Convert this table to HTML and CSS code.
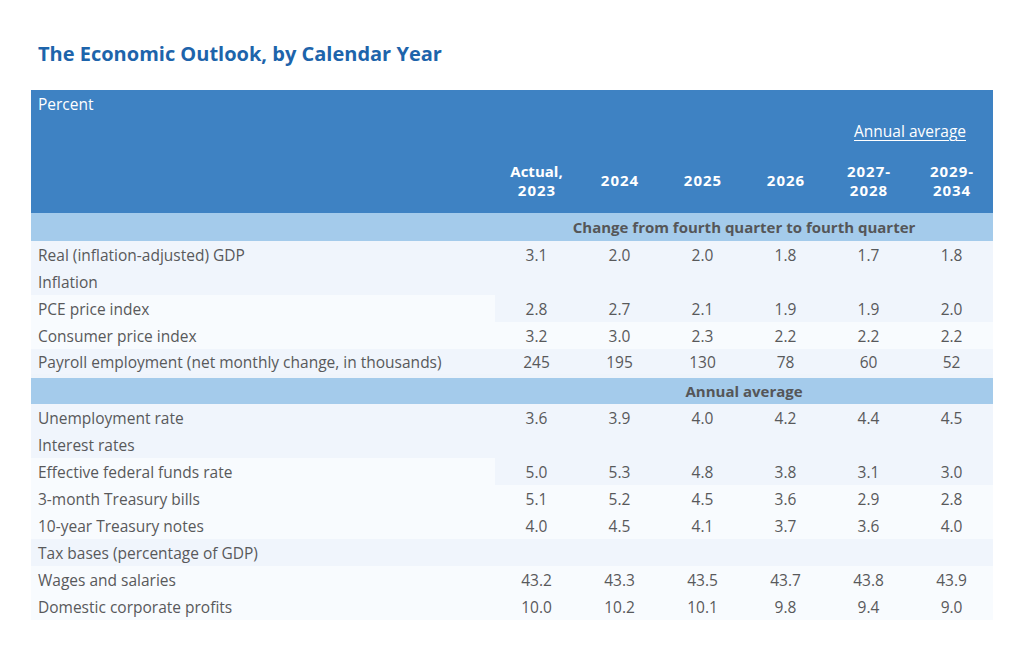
FILE: index.html
```html
<!DOCTYPE html>
<html lang="en">
<head>
<meta charset="utf-8">
<title>The Economic Outlook, by Calendar Year</title>
<link rel="stylesheet" href="styles.css">
</head>
<body>
<main class="page">
  <h1 class="title">The Economic Outlook, by Calendar Year</h1>
  <table class="outlook">
    <colgroup>
      <col class="col-label">
      <col class="col-num"><col class="col-num"><col class="col-num">
      <col class="col-num"><col class="col-num"><col class="col-num">
    </colgroup>
    <thead>
      <tr class="h-unit"><th colspan="7" class="unit">Percent</th></tr>
      <tr class="h-group">
        <th colspan="5"></th>
        <th colspan="2" class="group"><span class="ul">Annual average</span></th>
      </tr>
      <tr class="h-cols">
        <th></th>
        <th>Actual,<br><span class="yr">2023</span></th>
        <th><span class="yr">2024</span></th>
        <th><span class="yr">2025</span></th>
        <th><span class="yr">2026</span></th>
        <th><span class="yr">2027-</span><br><span class="yr">2028</span></th>
        <th><span class="yr">2029-</span><br><span class="yr">2034</span></th>
      </tr>
    </thead>
    <tbody>
      <tr class="section"><td></td><td colspan="6">Change from fourth quarter to fourth quarter</td></tr>
      <tr class="main"><td>Real (inflation-adjusted) GDP</td><td>3.1</td><td>2.0</td><td>2.0</td><td>1.8</td><td>1.7</td><td>1.8</td></tr>
      <tr class="main"><td>Inflation</td><td></td><td></td><td></td><td></td><td></td><td></td></tr>
      <tr class="sub first"><td>PCE price index</td><td>2.8</td><td>2.7</td><td>2.1</td><td>1.9</td><td>1.9</td><td>2.0</td></tr>
      <tr class="sub"><td>Consumer price index</td><td>3.2</td><td>3.0</td><td>2.3</td><td>2.2</td><td>2.2</td><td>2.2</td></tr>
      <tr class="main"><td>Payroll employment (net monthly change, in thousands)</td><td>245</td><td>195</td><td>130</td><td>78</td><td>60</td><td>52</td></tr>
      <tr class="section"><td></td><td colspan="6">Annual average</td></tr>
      <tr class="main"><td>Unemployment rate</td><td>3.6</td><td>3.9</td><td>4.0</td><td>4.2</td><td>4.4</td><td>4.5</td></tr>
      <tr class="main"><td>Interest rates</td><td></td><td></td><td></td><td></td><td></td><td></td></tr>
      <tr class="sub first"><td>Effective federal funds rate</td><td>5.0</td><td>5.3</td><td>4.8</td><td>3.8</td><td>3.1</td><td>3.0</td></tr>
      <tr class="sub"><td>3-month Treasury bills</td><td>5.1</td><td>5.2</td><td>4.5</td><td>3.6</td><td>2.9</td><td>2.8</td></tr>
      <tr class="sub"><td>10-year Treasury notes</td><td>4.0</td><td>4.5</td><td>4.1</td><td>3.7</td><td>3.6</td><td>4.0</td></tr>
      <tr class="main"><td>Tax bases (percentage of GDP)</td><td></td><td></td><td></td><td></td><td></td><td></td></tr>
      <tr class="sub"><td>Wages and salaries</td><td>43.2</td><td>43.3</td><td>43.5</td><td>43.7</td><td>43.8</td><td>43.9</td></tr>
      <tr class="sub"><td>Domestic corporate profits</td><td>10.0</td><td>10.2</td><td>10.1</td><td>9.8</td><td>9.4</td><td>9.0</td></tr>
    </tbody>
  </table>
</main>
</body>
</html>
```
FILE: styles.css
```css
* { box-sizing: border-box; }
html, body { margin: 0; padding: 0; background: #ffffff; }
body {
  font-family: "Open Sans", "Liberation Sans", sans-serif;
  color: #58595b;
}
.page {
  padding: 41px 31px 0 31px;
  width: 1024px;
}
.title {
  margin: 0 0 0 7px;
  font-size: 20px;
  line-height: 26px;
  font-weight: 700;
  color: #1d64ab;
}
.outlook {
  margin-top: 23px;
  width: 962px;
  border-collapse: collapse;
  table-layout: fixed;
  font-size: 15.5px;
}
.col-label { width: 464px; }
.col-num { width: 83px; }
.outlook th, .outlook td { padding: 0; }
thead tr { background: #3e82c3; color: #ffffff; }
.h-unit th {
  height: 28px;
  text-align: left;
  font-weight: 400;
  padding: 0 0 0 7px;
  vertical-align: middle;
}
.h-group th {
  height: 26px;
  font-weight: 400;
  text-align: center;
  vertical-align: middle;
}
.ul { text-decoration: underline; text-underline-offset: 3px; }
.h-cols th {
  height: 69px;
  font-size: 15px;
  font-weight: 700;
  text-align: center;
  line-height: 19px;
  vertical-align: middle;
  padding-top: 4px;
}
.yr { letter-spacing: 1px; margin-right: -1px; }
.section td {
  background: #a4cbeb;
  height: 28px;
  font-size: 15px;
  font-weight: 700;
  text-align: center;
  color: #555658;
}
tbody tr + tr.section td { border-top: 4px solid #eef4fb; }
tbody td {
  height: 27px;
  text-align: center;
  vertical-align: middle;
}
tbody td:first-child { text-align: left; padding-left: 7px; }
tr.main td { background: #f0f5fc; }
tr.sub td { background: #f8fbfe; }
tr.sub.first td { background: #f0f5fc; }
tr.sub.first td:first-child { background: #f8fbfe; }
```
